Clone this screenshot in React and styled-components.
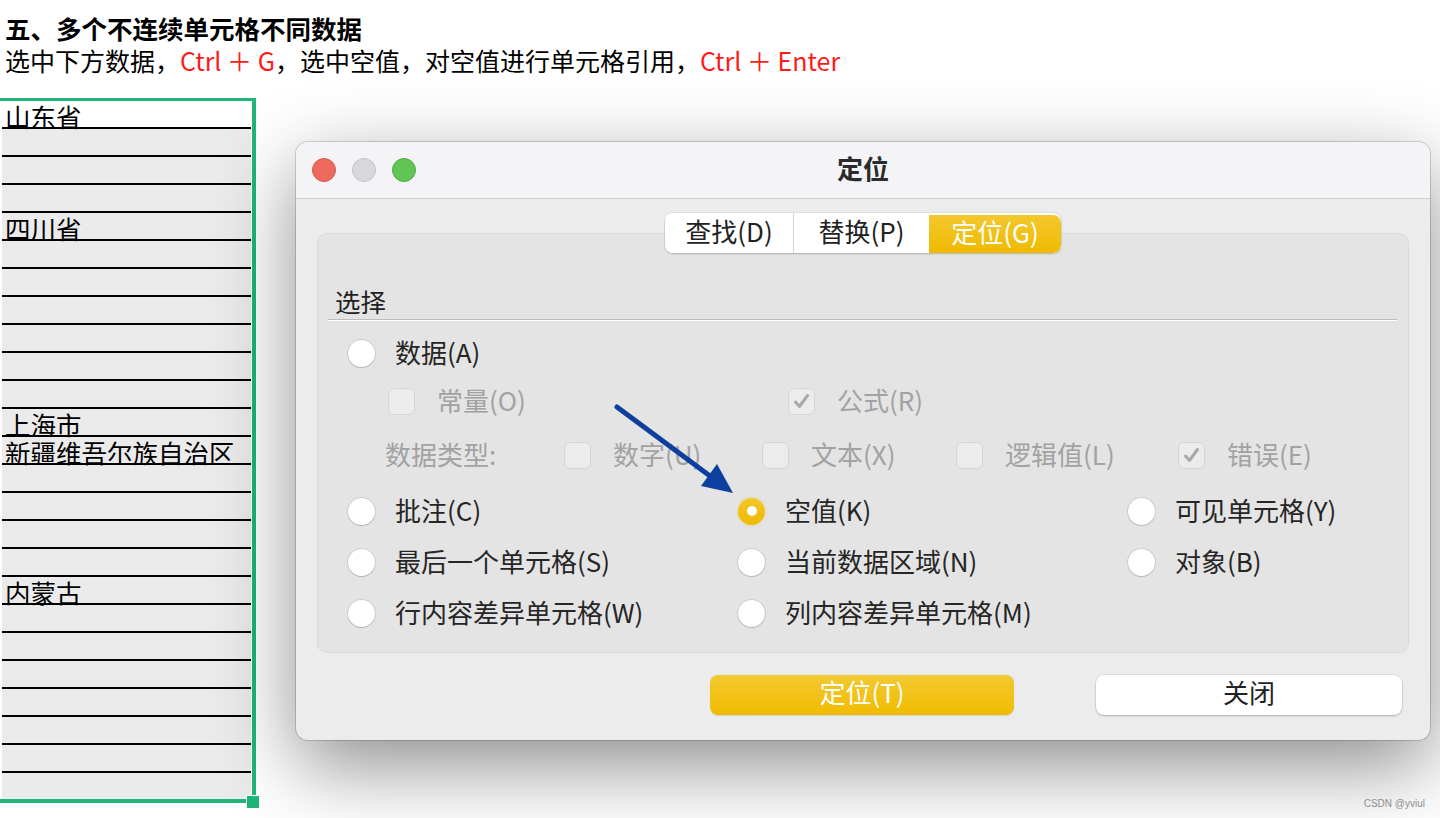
import React from "react";
import styled, { createGlobalStyle } from "styled-components";

const GlobalStyle = createGlobalStyle`
  html, body { margin: 0; padding: 0; background: #ffffff; }
  body { font-family: "Noto Sans CJK SC", "Noto Sans", sans-serif; }
  * { box-sizing: border-box; }
`;

const Page = styled.div`
  position: relative;
  width: 1440px;
  height: 818px;
  overflow: hidden;
  background: #ffffff;
`;

const Header = styled.header`
  padding: 12px 0 0 5px;
  color: #000;
  font-size: 25.5px;
  line-height: 32px;
`;

const Title = styled.div`
  font-weight: 700;
`;

const Desc = styled.div`
  font-weight: 400;
  font-size: 25px;
`;

const Red = styled.span`
  color: #ff1a1a;
`;

const Sheet = styled.div`
  position: relative;
  margin-top: 22px;
  width: 256px;
  border-top: 3px solid #1fb67a;
  border-right: 4px solid #1fb67a;
  border-bottom: 4px solid #1fb67a;
  padding: 0 1px 0 2px;
  background: #ffffff;
`;

const Cell = styled.div`
  height: ${(p) => (p.$last ? 26 : 28)}px;
  border-bottom: ${(p) => (p.$last ? "none" : "2px solid #000")};
  background: ${(p) => (p.$active ? "#ffffff" : "#ebebeb")};
  display: flex;
  align-items: flex-end;
  font-size: 25.5px;
  line-height: 27px;
  color: #000;
  white-space: nowrap;
  padding-left: 3px;
`;

const CellText = styled.span`
  position: relative;
  top: 2px;
`;

const FillHandle = styled.div`
  position: absolute;
  right: -8px;
  bottom: -10px;
  width: 14px;
  height: 14px;
  background: #1fb67a;
  border: 1px solid #ffffff;
`;

const Dialog = styled.div`
  position: absolute;
  left: 296px;
  top: 142px;
  width: 1134px;
  height: 598px;
  border-radius: 12px;
  background: #ececec;
  box-shadow: 0 0 0 1px rgba(0, 0, 0, 0.16), 0 26px 80px rgba(0, 0, 0, 0.45);
  overflow: hidden;
  display: flex;
  flex-direction: column;
`;

const TitleBar = styled.div`
  height: 57px;
  flex: none;
  background: #f4f4f6;
  border-bottom: 1px solid #cfcfcf;
  display: grid;
  grid-template-columns: 1fr auto 1fr;
  align-items: center;
  padding: 0 16px;
`;

const Lights = styled.div`
  display: flex;
  gap: 16px;
`;

const Light = styled.span`
  width: 24px;
  height: 24px;
  border-radius: 50%;
  background: ${(p) => p.$bg};
  border: 1px solid ${(p) => p.$bd};
`;

const WinTitle = styled.div`
  font-size: 26px;
  font-weight: 700;
  color: #2b2b2b;
  line-height: 30px;
  margin-top: -5px;
`;

const Body = styled.div`
  padding: 14px 21px 25px;
  display: flex;
  flex-direction: column;
`;

const TabsRow = styled.div`
  display: flex;
  justify-content: center;
  position: relative;
  z-index: 1;
  margin-bottom: -20px;
`;

const Tabs = styled.div`
  display: flex;
  height: 40px;
  background: #ffffff;
  border-radius: 8px;
  box-shadow: 0 0 0 0.5px rgba(0, 0, 0, 0.12), 0 1px 2px rgba(0, 0, 0, 0.18);
  overflow: hidden;
`;

const Tab = styled.div`
  width: ${(p) => p.$w}px;
  display: flex;
  align-items: center;
  justify-content: center;
  padding-bottom: 5px;
  font-size: 26px;
  color: ${(p) => (p.$active ? "#ffffff" : "#222222")};
  background: ${(p) =>
    p.$active ? "linear-gradient(#f3c82e, #f0ba00)" : "#ffffff"};
  border-left: ${(p) => (p.$divider ? "1px solid #d4d4d4" : "none")};
  border-radius: ${(p) => (p.$active ? "0 8px 8px 0" : "0")};
  margin-top: ${(p) => (p.$active ? 2 : 0)}px;
`;

const Group = styled.div`
  height: 420px;
  background: #e4e4e4;
  border: 1px solid #d9d9d9;
  border-radius: 10px;
  padding-top: 20px;
  display: flex;
  flex-direction: column;
`;

const GroupLabel = styled.div`
  margin: 32px 0 0 17px;
  height: 28px;
  display: flex;
  align-items: center;
  font-size: 25.5px;
  color: #222;
`;

const Separator = styled.div`
  margin: 5px 11px 0 10px;
  border-top: 1px solid #bcbcbc;
  border-bottom: 1px solid #ffffff;
`;

const Options = styled.div`
  padding-left: 30px;
  padding-top: 7px;
  display: flex;
  flex-direction: column;
`;

const Row = styled.div`
  height: ${(p) => p.$h}px;
  display: flex;
  align-items: center;
  padding-left: ${(p) => p.$indent || 0}px;
`;

const Grid3 = styled.div`
  height: ${(p) => p.$h}px;
  display: grid;
  grid-template-columns: 390px 390px 390px;
  align-items: center;
`;

const Item = styled.div`
  display: flex;
  align-items: center;
  width: ${(p) => (p.$w ? `${p.$w}px` : "auto")};
  flex: none;
`;

const Label = styled.span`
  font-size: 26px;
  line-height: 30px;
  color: ${(p) => (p.$disabled ? "#a2a2a2" : "#262626")};
  margin-left: ${(p) => p.$gap || 0}px;
  white-space: nowrap;
  position: relative;
  top: -1px;
`;

const RadioCircle = styled.span`
  width: 27px;
  height: 27px;
  border-radius: 50%;
  flex: none;
  display: flex;
  align-items: center;
  justify-content: center;
  background: ${(p) =>
    p.$checked ? "linear-gradient(#f4c62a, #f0ba00)" : "#ffffff"};
  box-shadow: ${(p) =>
    p.$checked
      ? "0 0 3px rgba(240, 186, 0, 0.45)"
      : "0 0 0 1px rgba(0,0,0,0.09), 0 1px 1px rgba(0,0,0,0.12)"};
  &::after {
    content: "";
    display: ${(p) => (p.$checked ? "block" : "none")};
    width: 10px;
    height: 10px;
    border-radius: 50%;
    background: #ffffff;
  }
`;

const CheckBox = styled.span`
  width: 27px;
  height: 27px;
  border-radius: 6px;
  flex: none;
  background: #ececec;
  border: 1px solid #d5d5d5;
  display: flex;
  align-items: center;
  justify-content: center;
`;

const Buttons = styled.div`
  margin-top: 22px;
  padding-left: 393px;
  display: flex;
  gap: 82px;
`;

const Button = styled.div`
  width: ${(p) => p.$w}px;
  height: 40px;
  border-radius: 8px;
  display: flex;
  align-items: center;
  justify-content: center;
  padding-bottom: 7px;
  font-size: 26px;
  color: ${(p) => (p.$primary ? "#ffffff" : "#222222")};
  background: ${(p) =>
    p.$primary ? "linear-gradient(#f3c930, #f0bb00)" : "#ffffff"};
  box-shadow: ${(p) =>
    p.$primary
      ? "0 0.5px 1px rgba(0,0,0,0.12)"
      : "0 0 0 0.5px rgba(0,0,0,0.12), 0 1px 2px rgba(0,0,0,0.22)"};
`;

const ArrowSvg = styled.svg`
  position: absolute;
  left: 0;
  top: 0;
  pointer-events: none;
`;

const Watermark = styled.div`
  position: absolute;
  right: 15px;
  bottom: 9px;
  font-family: "Liberation Sans", Arial, sans-serif;
  font-size: 10px;
  color: #8f8f8f;
`;

const Radio = ({ label, checked }) => (
  <Item>
    <RadioCircle $checked={checked} />
    <Label $gap={20}>{label}</Label>
  </Item>
);

const Check = ({ label, checked, w }) => (
  <Item $w={w}>
    <CheckBox>
      {checked && (
        <svg width="19" height="19" viewBox="0 0 19 19">
          <path
            d="M3.5 10 L7.5 14.5 L15.5 3.5"
            fill="none"
            stroke="#a9a9a9"
            strokeWidth="3"
            strokeLinecap="round"
            strokeLinejoin="round"
          />
        </svg>
      )}
    </CheckBox>
    <Label $disabled $gap={22}>
      {label}
    </Label>
  </Item>
);

const cells = [
  "山东省", "", "", "",
  "四川省", "", "", "", "", "", "",
  "上海市", "新疆维吾尔族自治区", "", "", "", "",
  "内蒙古", "", "", "", "", "", "", "",
];

export default function App() {
  return (
    <Page>
      <GlobalStyle />
      <Header>
        <Title>五、多个不连续单元格不同数据</Title>
        <Desc>
          选中下方数据，<Red>Ctrl ＋ G</Red>，选中空值，对空值进行单元格引用，
          <Red>Ctrl ＋ Enter</Red>
        </Desc>
      </Header>

      <Sheet>
        {cells.map((c, i) => (
          <Cell key={i} $active={i === 0} $last={i === cells.length - 1}>
            {c && <CellText>{c}</CellText>}
          </Cell>
        ))}
        <FillHandle />
      </Sheet>

      <Dialog>
        <TitleBar>
          <Lights>
            <Light $bg="#ee6a5e" $bd="#d5594e" />
            <Light $bg="#d9d9db" $bd="#c3c3c5" />
            <Light $bg="#61c454" $bd="#4fab42" />
          </Lights>
          <WinTitle>定位</WinTitle>
          <span />
        </TitleBar>
        <Body>
          <TabsRow>
            <Tabs>
              <Tab $w={128}>查找(D)</Tab>
              <Tab $w={136} $divider>
                替换(P)
              </Tab>
              <Tab $w={132} $active>
                定位(G)
              </Tab>
            </Tabs>
          </TabsRow>
          <Group>
            <GroupLabel>选择</GroupLabel>
            <Separator />
            <Options>
              <Row $h={50}>
                <Radio label="数据(A)" />
              </Row>
              <Row $h={46} $indent={40}>
                <Check label="常量(O)" w={400} />
                <Check label="公式(R)" checked />
              </Row>
              <Row $h={62} $indent={37}>
                <Item $w={179}>
                  <Label $disabled>数据类型:</Label>
                </Item>
                <Check label="数字(U)" w={198} />
                <Check label="文本(X)" w={194} />
                <Check label="逻辑值(L)" w={222} />
                <Check label="错误(E)" checked />
              </Row>
              <Grid3 $h={50}>
                <Radio label="批注(C)" />
                <Radio label="空值(K)" checked />
                <Radio label="可见单元格(Y)" />
              </Grid3>
              <Grid3 $h={52}>
                <Radio label="最后一个单元格(S)" />
                <Radio label="当前数据区域(N)" />
                <Radio label="对象(B)" />
              </Grid3>
              <Grid3 $h={50}>
                <Radio label="行内容差异单元格(W)" />
                <Radio label="列内容差异单元格(M)" />
              </Grid3>
            </Options>
          </Group>
          <Buttons>
            <Button $w={304} $primary>
              定位(T)
            </Button>
            <Button $w={306}>关闭</Button>
          </Buttons>
        </Body>
      </Dialog>

      <ArrowSvg width="1440" height="818" viewBox="0 0 1440 818">
        <line
          x1="617"
          y1="407"
          x2="710"
          y2="476"
          stroke="#0c3f9e"
          strokeWidth="5"
          strokeLinecap="round"
        />
        <polygon points="733,493 701,486 717,464" fill="#0c3f9e" />
      </ArrowSvg>

      <Watermark>CSDN @yviul</Watermark>
    </Page>
  );
}
